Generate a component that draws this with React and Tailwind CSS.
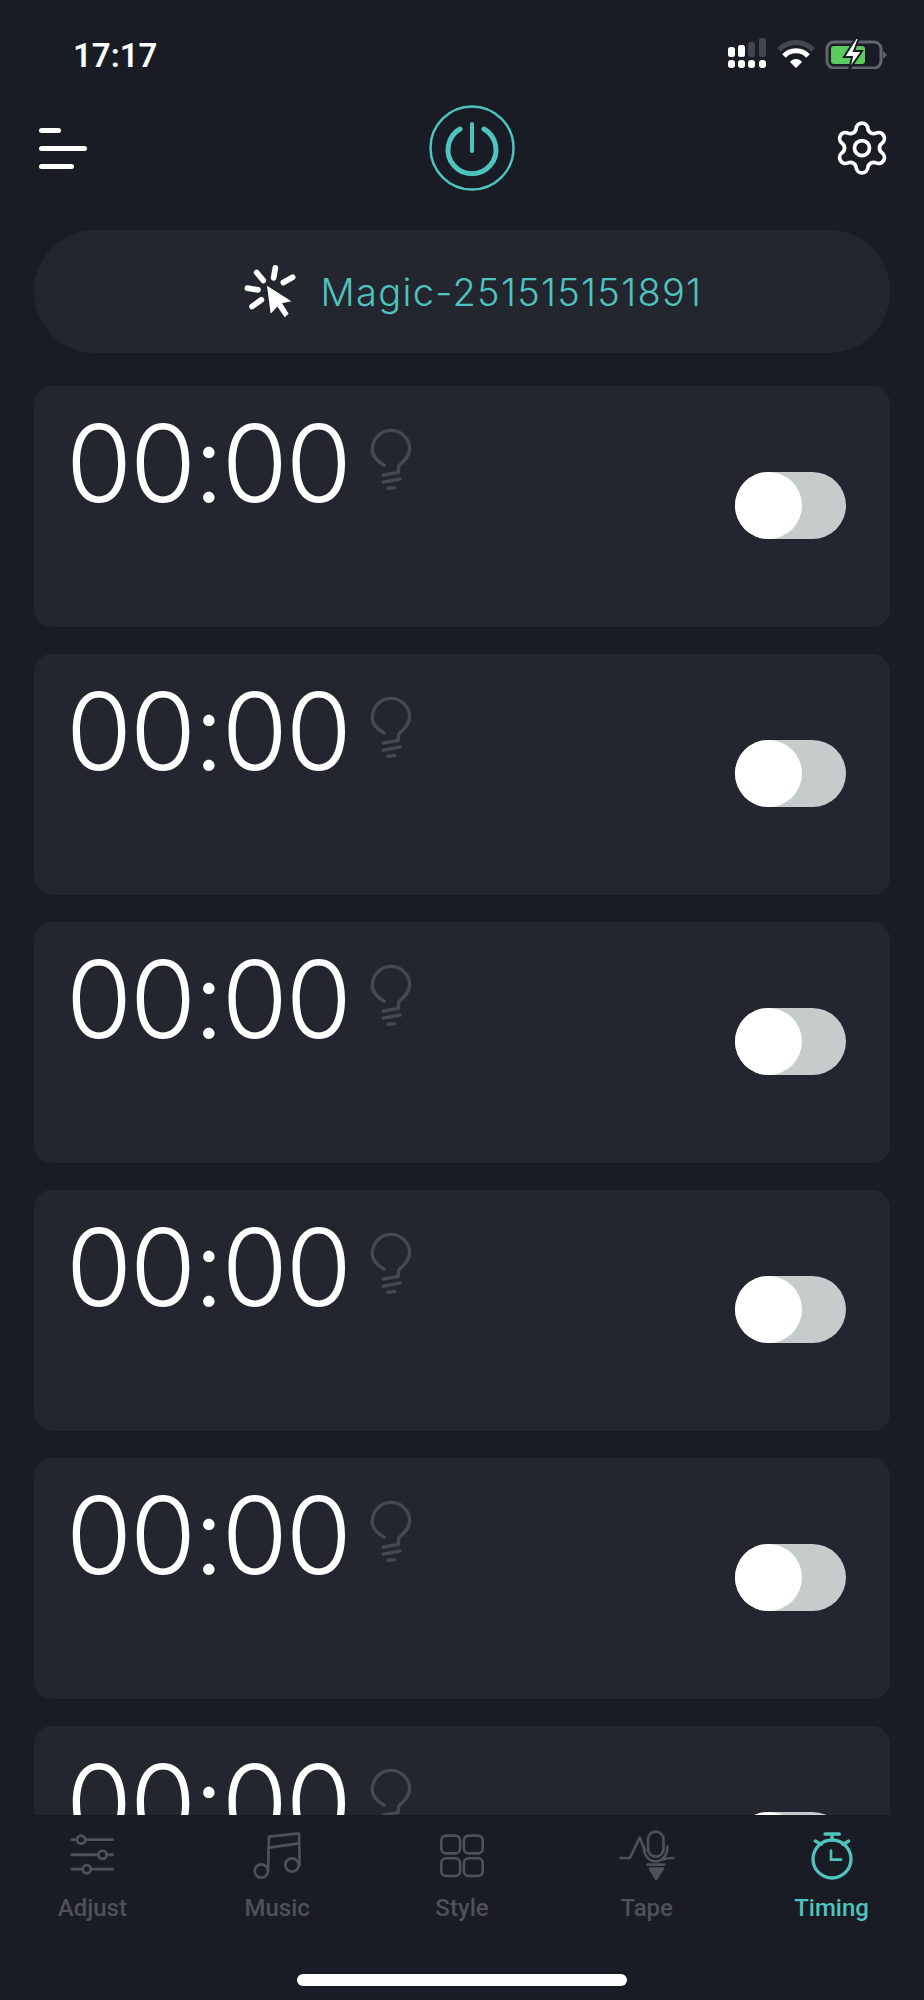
import { Settings } from "lucide-react";

const TEAL = "#4fc3bd";
const GRAY = "#4e505a";

function StatusIcons() {
  return (
    <svg width="160" height="32" viewBox="0 0 160 32" fill="none">
      {/* signal */}
      <rect x="1" y="10" width="7" height="10" rx="2.5" fill="#fff" />
      <rect x="11" y="8" width="7" height="12" rx="2.5" fill="#fff" />
      <rect x="21" y="5" width="7" height="15" rx="2.5" fill="#44464f" />
      <rect x="32" y="1" width="7" height="19" rx="2.5" fill="#44464f" />
      <rect x="1" y="23" width="7" height="8" rx="3" fill="#fff" />
      <rect x="11" y="23" width="7" height="8" rx="3" fill="#fff" />
      <rect x="21" y="23" width="7" height="8" rx="3" fill="#fff" />
      <rect x="32" y="23" width="7" height="8" rx="3" fill="#fff" />
      {/* wifi */}
      <path d="M52 13 C61 3 77 3 86 13" stroke="#44464f" strokeWidth="5" />
      <path d="M57 19 C63 12 75 12 81 19" stroke="#fff" strokeWidth="5" />
      <path d="M63 25 C66 21 72 21 75 25 L69 31 Z" fill="#fff" />
      {/* battery */}
      <rect x="100" y="5" width="54" height="26" rx="7" stroke="#62646c" strokeWidth="3" />
      <rect x="104" y="9" width="34" height="18" rx="3" fill="#5ccb5f" />
      <path d="M156 14 L160 18 L156 22 Z" fill="#62646c" />
      <path d="M129 1 L117 20 L125 20 L122 33 L135 14 L127 14 L132 1 Z" fill="#fff" stroke="#191c25" strokeWidth="2" />
    </svg>
  );
}

function MenuIcon() {
  return (
    <div className="flex flex-col gap-[13px] w-[48px]">
      <div className="h-[5px] w-[22px] rounded-full bg-white" />
      <div className="h-[5px] w-[48px] rounded-full bg-white" />
      <div className="h-[5px] w-[35px] rounded-full bg-white" />
    </div>
  );
}

function PowerIcon() {
  return (
    <svg width="86" height="86" viewBox="0 0 86 86" fill="none" stroke={TEAL}>
      <circle cx="43" cy="43" r="41.5" strokeWidth="2.5" />
      <path d="M31 24 A24 24 0 1 0 55 24" strokeWidth="5" strokeLinecap="round" />
      <path d="M43 19 V46" strokeWidth="4" strokeLinecap="round" />
    </svg>
  );
}

function ClickIcon() {
  return (
    <svg width="55" height="57" viewBox="720 520 165 170" fill="none" stroke="#fff" strokeWidth="17" strokeLinecap="round">
      <path d="M764 548 L784 572" />
      <path d="M820 534 L815 564" />
      <path d="M872 562 L844 578" />
      <path d="M736 595 L768 600" />
      <path d="M778 630 L750 650" />
      <path d="M795 588 L868 634 L840 640 L860 672 L848 682 L826 650 L806 672 Z" fill="#fff" stroke="none" />
    </svg>
  );
}

function BulbIcon() {
  return (
    <svg width="44" height="66" viewBox="90 50 130 195" fill="none" stroke="#464952" strokeWidth="10" strokeLinecap="round">
      <path d="M135 163 C112 150 97 135 100 112 C103 80 128 60 155 60 C185 60 210 85 210 115 C210 135 195 150 178 165 L176 184 L132 192" />
      <path d="M132 213 L182 204" />
      <path d="M146 231 L166 229" />
    </svg>
  );
}

function TimerCard() {
  return (
    <div className="shrink-0 h-[241px] rounded-[18px] bg-[#23262f] pl-[32px] pr-[44px] flex justify-between">
      <div className="flex items-start">
        <span className="h-[122px] text-[107px] leading-[122px] mt-[16px] tracking-[-2.2px] font-[350] text-white font-['Inter',sans-serif]">00:00</span>
        <div className="mt-[41px] ml-[19px]">
          <BulbIcon />
        </div>
      </div>
      <div className="mt-[86px] h-[67px] w-[111px] rounded-full bg-[#c5cccb]">
        <div className="h-[67px] w-[67px] rounded-full bg-white" />
      </div>
    </div>
  );
}

function AdjustIcon() {
  return (
    <svg width="46" height="44" viewBox="115 75 143 140" fill="none" stroke={GRAY} strokeWidth="9" strokeLinecap="round">
      <path d="M122 93 H252 M122 141 H252 M122 187 H252" />
      <circle cx="152" cy="93" r="13" fill="#191c25" />
      <circle cx="220" cy="141" r="13" fill="#191c25" />
      <circle cx="170" cy="187" r="13" fill="#191c25" />
    </svg>
  );
}

function MusicIcon() {
  return (
    <svg width="50" height="50" viewBox="665 68 150 150" fill="none" stroke={GRAY} strokeWidth="8" strokeLinecap="round" strokeLinejoin="round">
      <circle cx="693" cy="188" r="20" />
      <circle cx="785" cy="170" r="20" />
      <path d="M713 185 L716 85 L806 75 L808 170" />
      <path d="M716 118 L806 105" />
    </svg>
  );
}

function StyleIcon() {
  return (
    <svg width="44" height="46" viewBox="296 76 136 134" fill="none" stroke={GRAY} strokeWidth="8">
      <rect x="300" y="80" width="58" height="55" rx="15" />
      <rect x="370" y="80" width="58" height="55" rx="15" />
      <rect x="300" y="150" width="58" height="55" rx="15" />
      <rect x="370" y="150" width="58" height="55" rx="15" />
    </svg>
  );
}

function TapeIcon() {
  return (
    <svg width="56" height="52" viewBox="115 66 170 156" fill="none" stroke={GRAY} strokeWidth="8" strokeLinecap="round" strokeLinejoin="round">
      <path d="M120 150 H148 L178 88 L194 128" />
      <rect x="203" y="70" width="47" height="76" rx="23" />
      <path d="M190 115 C190 175 262 175 262 115" />
      <path d="M250 155 C258 150 268 150 280 150" />
      <path d="M202 170 H252" />
      <path d="M209 182 H248 L228 214 Z" fill={GRAY} />
    </svg>
  );
}

function TimingIcon() {
  return (
    <svg width="44" height="50" viewBox="688 66 130 150" fill="none" stroke={TEAL} strokeWidth="10" strokeLinecap="round">
      <circle cx="753" cy="150" r="57" />
      <path d="M732 75 H775 M753 75 V92 M703 96 L720 106 M803 96 L786 106" />
      <path d="M750 125 V152 H780" strokeWidth="8" />
    </svg>
  );
}

const tabs = [
  { label: "Adjust", icon: <AdjustIcon /> },
  { label: "Music", icon: <MusicIcon /> },
  { label: "Style", icon: <StyleIcon /> },
  { label: "Tape", icon: <TapeIcon /> },
  { label: "Timing", icon: <TimingIcon />, active: true },
];

export default function App() {
  return (
    <div className="h-[2000px] w-[924px] bg-[#191c25] flex flex-col overflow-hidden font-['Roboto',sans-serif]">

      {/* Status bar */}
      <div className="h-[105px] shrink-0 pl-[73px] pr-[37px] pt-[37px] flex justify-between items-start">
        <span className="mt-[1px] text-[33px] leading-[36px] font-semibold text-white">17:17</span>
        <StatusIcons />
      </div>

      {/* Header */}
      <div className="h-[86px] shrink-0 pl-[39px] flex items-center">
        <MenuIcon />
        <div className="ml-[342px]">
          <PowerIcon />
        </div>
        <div className="ml-[317px]">
          <Settings size={60} color="#fff" strokeWidth={1.5} />
        </div>
      </div>

      <div className="flex-1 min-h-0 px-[34px] pt-[39px] flex flex-col">

        {/* Device pill */}
        <div className="h-[123px] shrink-0 pl-[20px] rounded-[61px] bg-[#23262f] flex items-center justify-center gap-[24px]">
          <ClickIcon />
          <span className="mt-[1px] text-[38px] tracking-[1.3px] font-light text-[#4fc3bd] font-['Inter',sans-serif]">Magic-251515151891</span>
        </div>

        {/* Timers */}
        <div className="flex-1 min-h-0 mt-[33px] flex flex-col gap-[27px] overflow-hidden">
          {[1, 2, 3, 4, 5, 6].map((id) => (
            <TimerCard key={id} />
          ))}
        </div>

      </div>

      {/* Tab bar */}
      <div className="h-[185px] shrink-0 flex flex-col">
        <div className="grid grid-cols-5 pt-[14px]">
          {tabs.map((tab) => (
            <div key={tab.label} className="flex flex-col items-center">
              <div className="h-[54px] flex items-center justify-center">{tab.icon}</div>
              <span className={`mt-[10px] text-[24px] leading-[30px] font-medium ${tab.active ? "text-[#4fc3bd]" : "text-[#4e505a]"}`}>
                {tab.label}
              </span>
            </div>
          ))}
        </div>
        <div className="mt-[51px] mx-auto h-[12px] w-[330px] rounded-full bg-white" />
      </div>

    </div>
  );
}
